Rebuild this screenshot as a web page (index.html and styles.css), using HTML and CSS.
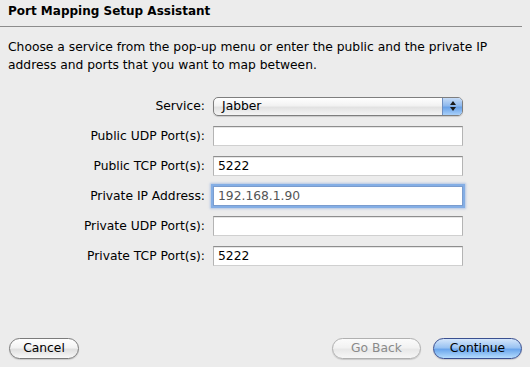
FILE: index.html
```html
<!DOCTYPE html>
<html>
<head>
<meta charset="utf-8">
<link rel="stylesheet" href="styles.css">
</head>
<body>
<div class="window">
  <div class="title">Port Mapping Setup Assistant</div>
  <div class="sep"></div>
  <p class="intro">Choose a service from the pop-up menu or enter the public and the private IP address and ports that you want to map between.</p>
  <div class="form">
    <label class="lbl">Service:</label>
    <div class="popup">
      <span class="popup-text">Jabber</span>
      <span class="popup-cap">
        <svg width="8" height="12" viewBox="0 0 8 12"><path d="M4 1 L7 5 L1 5 Z M4 11 L7 7 L1 7 Z" fill="#1a1a1a"/></svg>
      </span>
    </div>
    <label class="lbl">Public UDP Port(s):</label>
    <div class="field"></div>
    <label class="lbl">Public TCP Port(s):</label>
    <div class="field">5222</div>
    <label class="lbl">Private IP Address:</label>
    <div class="field focus">192.168.1.90</div>
    <label class="lbl">Private UDP Port(s):</label>
    <div class="field"></div>
    <label class="lbl">Private TCP Port(s):</label>
    <div class="field">5222</div>
  </div>
  <div class="buttons">
    <div class="btn">Cancel</div>
    <div class="spacer"></div>
    <div class="btn disabled">Go Back</div>
    <div class="btn default">Continue</div>
  </div>
</div>
</body>
</html>
```
FILE: styles.css
```css
html, body {
  margin: 0;
  padding: 0;
  background: #ececec;
}
.window {
  width: 530px;
  height: 367px;
  display: flex;
  flex-direction: column;
  font-family: "DejaVu Sans", sans-serif;
  font-size: 12.3px;
  color: #000;
  box-sizing: border-box;
}
.title {
  font-weight: bold;
  font-size: 12px;
  padding: 4px 0 0 8px;
  height: 20px;
  line-height: 15px;
}
.sep {
  height: 1px;
  width: 522px;
  background: #8c8c8c;
  margin-top: 2px;
}
.intro {
  margin: 11px 0 0 8px;
  width: 515px;
  line-height: 18px;
}
.form {
  display: grid;
  grid-template-columns: 197px 250px;
  column-gap: 8px;
  row-gap: 10px;
  grid-auto-rows: 20px;
  margin: 22px 0 0 8px;
  align-items: center;
}
.lbl {
  text-align: right;
  line-height: 20px;
}
.popup {
  height: 17px;
  border: 1px solid #7e7e7e;
  border-radius: 5px;
  background: linear-gradient(#ffffff, #f2f2f2 45%, #e2e2e2 55%, #f4f4f4);
  display: flex;
  align-items: center;
  overflow: hidden;
  box-shadow: 0 1px 1px rgba(0,0,0,0.15);
}
.popup-text {
  flex: 1;
  padding-left: 8px;
  line-height: 17px;
}
.popup-cap {
  width: 19px;
  height: 17px;
  display: flex;
  align-items: center;
  justify-content: center;
  border-left: 1px solid #6f8fc0;
  background: linear-gradient(#c6dcf7, #8fb9ee 45%, #6aa2e8 55%, #a8d0fa);
}
.field {
  height: 20px;
  box-sizing: border-box;
  background: #fff;
  border: 1px solid #b4b4b4;
  border-top-color: #8e8e8e;
  border-bottom-color: #d0d0d0;
  box-shadow: inset 0 1px 0 #e6e6e6;
  padding-left: 4px;
  line-height: 18px;
}
.field.focus {
  color: #555;
  box-shadow: 0 0 0 2px #84aee5, 0 0 2px 3px rgba(120,160,220,0.5);
  border-color: #7a9cce;
}
.buttons {
  margin-top: auto;
  margin-bottom: 8px;
  display: flex;
  padding: 0 8px 0 9px;
  gap: 12px;
}
.spacer {
  flex: 1;
}
.btn {
  height: 21px;
  box-sizing: border-box;
  border: 1px solid #7b7b7b;
  border-radius: 11px;
  background: linear-gradient(#ffffff, #f3f3f3 45%, #e0e0e0 55%, #f8f8f8);
  text-align: center;
  line-height: 19px;
  font-size: 12.3px;
  width: 70px;
  box-shadow: 0 1px 1px rgba(0,0,0,0.15);
}
.btn.disabled {
  width: 89px;
  color: #8a8a8a;
  border-color: #b0b0b0;
  background: linear-gradient(#fbfbfb, #f2f2f2 45%, #e8e8e8 55%, #f6f6f6);
}
.btn.default {
  width: 89px;
  border-color: #3a4f90;
  background: linear-gradient(#d4e6fb, #9ac3f2 45%, #6ba6ec 55%, #b4dcfd);
}
```
